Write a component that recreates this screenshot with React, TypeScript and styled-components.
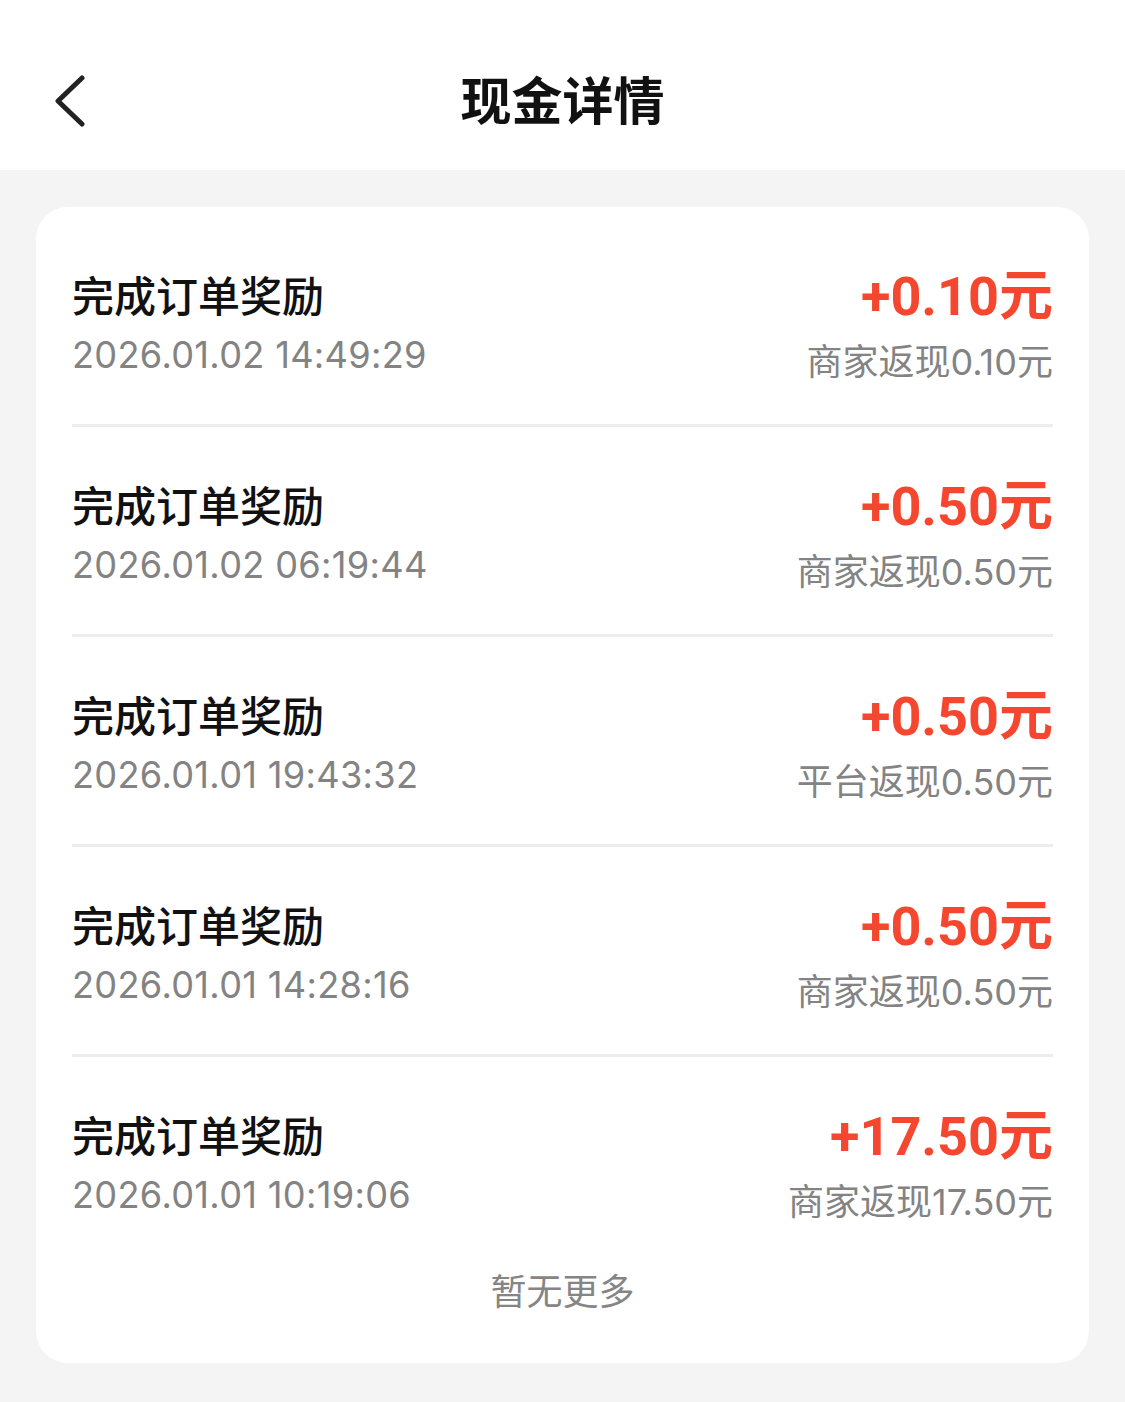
import React from 'react';
import styled, { createGlobalStyle } from 'styled-components';

const GlobalStyle = createGlobalStyle`
  html, body {
    margin: 0;
    padding: 0;
    background: #f4f4f4;
  }
  body {
    font-family: Inter, "Noto Sans CJK SC", sans-serif;
    -webkit-font-smoothing: antialiased;
  }
`

const Page = styled.div`
  width: 1125px;
  min-height: 1402px;
  background: #f4f4f4;
`
const Header = styled.div`
  height: 170px;
  box-sizing: border-box;
  padding-top: 30px;
  background: #fff;
  display: grid;
  grid-template-columns: 120px 1fr 120px;
  align-items: center;
`
const BackButton = styled.div`
  display: flex;
  align-items: center;
  padding-left: 52px;
  padding-top: 2px;
`
const Title = styled.div`
  text-align: center;
  font-family: "Noto Sans CJK SC", sans-serif;
  font-size: 51px;
  font-weight: 700;
  line-height: 60px;
  color: #111;
  padding-bottom: 4px;
`
const Card = styled.div`
  margin: 37px 36px 0;
  background: #fff;
  border-radius: 32px;
  padding: 10px 36px 53px;
`
const Row = styled.div<{ last?: boolean }>`
  height: 207px;
  display: flex;
  justify-content: space-between;
  align-items: flex-start;
  border-bottom: ${p => (p.last ? 'none' : '3px solid #ededed')};
`
const Left = styled.div`
  padding-top: 52px;
  display: flex;
  flex-direction: column;
  gap: 14px;
`
const Right = styled.div`
  padding-top: 50px;
  display: flex;
  flex-direction: column;
  align-items: flex-end;
  gap: 14px;
`
const RowTitle = styled.div`
  font-family: "Noto Sans CJK SC", sans-serif;
  font-size: 42px;
  font-weight: 500;
  line-height: 50px;
  color: #111;
`
const DateText = styled.div`
  font-size: 36.2px;
  line-height: 44px;
  color: #838383;
  letter-spacing: 0.3px;
`
const Amount = styled.div`
  font-family: Roboto, "Noto Sans CJK SC", sans-serif;
  font-size: 54px;
  font-weight: 700;
  line-height: 60px;
  color: #f5472f;
`
const Sub = styled.div`
  font-size: 36px;
  line-height: 42px;
  color: #838383;
`
const Footer = styled.div`
  margin-top: 4px;
  text-align: center;
  font-family: "Noto Sans CJK SC", sans-serif;
  font-size: 36px;
  line-height: 42px;
  color: #858585;
`

const records = [
  { time: '2026.01.02 14:49:29', amount: '0.10', source: '商家返现' },
  { time: '2026.01.02 06:19:44', amount: '0.50', source: '商家返现' },
  { time: '2026.01.01 19:43:32', amount: '0.50', source: '平台返现' },
  { time: '2026.01.01 14:28:16', amount: '0.50', source: '商家返现' },
  { time: '2026.01.01 10:19:06', amount: '17.50', source: '商家返现' },
];

function App() {
  return (
    <Page>
      <GlobalStyle />
      <Header>
        <BackButton>
          <svg width="36" height="52" viewBox="0 0 36 52">
            <polyline points="30,3 6,26 30,49" fill="none" stroke="#222" strokeWidth="5" strokeLinecap="round" strokeLinejoin="round" />
          </svg>
        </BackButton>
        <Title>现金详情</Title>
        <div />
      </Header>
      <Card>
        {records.map((r, i) => (
          <Row key={r.time} last={i === records.length - 1}>
            <Left>
              <RowTitle>完成订单奖励</RowTitle>
              <DateText>{r.time}</DateText>
            </Left>
            <Right>
              <Amount>+{r.amount}元</Amount>
              <Sub>{r.source}{r.amount}元</Sub>
            </Right>
          </Row>
        ))}
        <Footer>暂无更多</Footer>
      </Card>
    </Page>
  );
}

export default App;
